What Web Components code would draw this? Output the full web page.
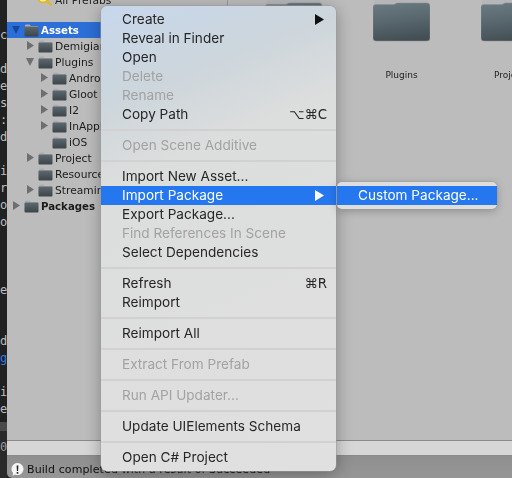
<!DOCTYPE html>
<html>
<head>
<meta charset="utf-8">
<title>Assets context menu</title>
<style>
  html, body { margin: 0; padding: 0; height: 100%; background: #222; overflow: hidden; }
</style>
</head>
<body>
<editor-window>
  <console-strip slot="console"></console-strip>
  <project-panel slot="panel">
    <tree-row slot="tree" favorite label="All Prefabs"></tree-row>
    <tree-row slot="tree" gap level="0" open selected label="Assets"></tree-row>
    <tree-row slot="tree" level="1" arrow label="Demigiant"></tree-row>
    <tree-row slot="tree" level="1" open label="Plugins"></tree-row>
    <tree-row slot="tree" level="2" arrow label="Android"></tree-row>
    <tree-row slot="tree" level="2" arrow label="Gloot"></tree-row>
    <tree-row slot="tree" level="2" arrow label="I2"></tree-row>
    <tree-row slot="tree" level="2" arrow label="InAppPurchasing"></tree-row>
    <tree-row slot="tree" level="2" label="iOS"></tree-row>
    <tree-row slot="tree" level="1" arrow label="Project"></tree-row>
    <tree-row slot="tree" level="1" label="Resources"></tree-row>
    <tree-row slot="tree" level="1" arrow label="StreamingAssets"></tree-row>
    <tree-row slot="tree" level="0" arrow bold label="Packages"></tree-row>
    <asset-tile slot="grid"></asset-tile>
    <asset-tile slot="grid" label="Plugins"></asset-tile>
    <asset-tile slot="grid" label="Project"></asset-tile>
  </project-panel>
  <status-bar slot="status">Build completed with a result of Succeeded</status-bar>
</editor-window>

<context-menu id="assets-menu">
  <menu-item sub>Create</menu-item>
  <menu-item>Reveal in Finder</menu-item>
  <menu-item>Open</menu-item>
  <menu-item disabled>Delete</menu-item>
  <menu-item disabled>Rename</menu-item>
  <menu-item shortcut="⌥⌘C">Copy Path</menu-item>
  <menu-sep></menu-sep>
  <menu-item disabled>Open Scene Additive</menu-item>
  <menu-sep></menu-sep>
  <menu-item>Import New Asset...</menu-item>
  <menu-item sub active>Import Package</menu-item>
  <menu-item>Export Package...</menu-item>
  <menu-item disabled>Find References In Scene</menu-item>
  <menu-item>Select Dependencies</menu-item>
  <menu-sep></menu-sep>
  <menu-item shortcut="⌘R">Refresh</menu-item>
  <menu-item>Reimport</menu-item>
  <menu-sep></menu-sep>
  <menu-item>Reimport All</menu-item>
  <menu-sep></menu-sep>
  <menu-item disabled>Extract From Prefab</menu-item>
  <menu-sep></menu-sep>
  <menu-item disabled>Run API Updater...</menu-item>
  <menu-sep></menu-sep>
  <menu-item>Update UIElements Schema</menu-item>
  <menu-sep></menu-sep>
  <menu-item>Open C# Project</menu-item>
</context-menu>
<sub-menu><menu-item active>Custom Package...</menu-item></sub-menu>

<script>
// helper: every component is a shadow root plus its own style
class Base extends HTMLElement {
  constructor() {
    super();
    this.attachShadow({ mode: 'open' });
  }
  connectedCallback() {
    this.shadowRoot.innerHTML = this.markup();
  }
}

class EditorWindow extends Base {
  markup() {
    return `
      <style>
        :host { display: flex; width: 512px; height: 478px; overflow: hidden; filter: blur(0.35px); }
        .left { flex: 0 0 7px; overflow: hidden; }
        .right { flex: 1; display: flex; flex-direction: column; min-width: 0; border-bottom-left-radius: 5px; overflow: hidden; }
      </style>
      <div class="left"><slot name="console"></slot></div>
      <div class="right">
        <slot name="panel"></slot>
        <slot name="status"></slot>
      </div>`;
  }
}

class ConsoleStrip extends Base {
  markup() {
    const lines = ['c','','d','e','s',':','d','','i','r','o','o','','','','e','','','d','g','','i','e'];
    const rows = lines.map(c => `<div class="ln${c === 'g' ? ' link' : ''}">${c}</div>`).join('');
    return `
      <style>
        :host { display: flex; flex-direction: column; height: 478px; background: #212121; }
        .code { height: 422px; padding-top: 27px; box-sizing: border-box; overflow: hidden; }
        .ln { height: 17px; line-height: 17px; text-align: right; font: 12px/17px "DejaVu Sans Mono", monospace; color: #bdbdbd; }
        .link { color: #2f7be0; }
        .bar { height: 9px; background: #4a4a4a; }
        .foot { flex: 1; text-align: right; font: 12px/32px "DejaVu Sans Mono", monospace; color: #9a9a9a; background: #2a2a2a; }
      </style>
      <div class="code">${rows}</div>
      <div class="bar"></div>
      <div class="foot">0</div>`;
  }
}

class ProjectPanel extends Base {
  markup() {
    return `
      <style>
        :host { display: flex; flex-direction: column; flex: 1; height: 456px; background: #bcbcbc; min-height: 0; }
        .main { flex: 1; display: flex; min-height: 0; overflow: hidden; }
        .tree { flex: 0 0 221px; box-sizing: border-box; border-right: 1px solid #9a9a9a; overflow: hidden; }
        .tree-in { margin-top: -8px; }
        .grid { flex: 1; display: flex; padding-left: 37px; overflow: hidden; }
        .crumbs { height: 16px; box-sizing: border-box; background: #d6d6d6; border-top: 1px solid #8a8a8a; border-bottom: 1px solid #8a8a8a; }
      </style>
      <div class="main">
        <div class="tree"><div class="tree-in"><slot name="tree"></slot></div></div>
        <div class="grid"><slot name="grid"></slot></div>
      </div>
      <div class="crumbs"></div>`;
  }
}

class TreeRow extends Base {
  markup() {
    const level = Number(this.getAttribute('level') || 0);
    const open = this.hasAttribute('open');
    const hasArrow = open || this.hasAttribute('arrow');
    const selected = this.hasAttribute('selected');
    const strong = this.hasAttribute('bold') || selected;
    const arrowColor = selected ? '#17479a' : '#6f6f6f';
    const tri = open ? 'M0 1h8L4 9z' : 'M1 0l7 4.5L1 9z';
    const arrow = hasArrow ? `<svg width="8" height="10" viewBox="0 0 8 10"><path d="${tri}" fill="${arrowColor}"/></svg>` : '';
    const icon = this.hasAttribute('favorite')
      ? `<svg width="16" height="14" viewBox="0 0 16 14"><circle cx="6" cy="4.5" r="5" fill="#f1e8b4" stroke="#e3b81e" stroke-width="2"/><path d="M10 8l4.5 4.5" stroke="#e3b81e" stroke-width="2.4"/></svg>`
      : `<svg width="15" height="13" viewBox="0 0 15 13">
           <path d="M1 3V1.5Q1 .5 2 .5h3.5L7 2h6.5q.8 0 .8 1z" fill="#a9adb0"/>
           <rect x=".5" y="2.5" width="14" height="10" rx="1" fill="url(#f)"/>
           <defs><linearGradient id="f" x1="0" y1="0" x2="0" y2="1"><stop offset="0" stop-color="#5d6a70"/><stop offset="1" stop-color="#3b4449"/></linearGradient></defs>
         </svg>`;
    return `
      <style>
        :host { display: block; height: 16px; ${this.hasAttribute('gap') ? 'margin-top: 14px;' : ''} }
        .row { display: flex; align-items: center; height: 16px; white-space: nowrap;
          padding-left: ${5 + level * 14}px; gap: 4px;
          font: ${strong ? '700 10.2px' : '400 10.7px'} "DejaVu Sans", sans-serif;
          color: ${selected ? '#fff' : '#1c1c1c'}; background: ${selected ? '#2c6fd8' : 'none'}; }
        .arrow { flex: 0 0 8px; display: flex; }
        .icon { flex: none; display: flex; margin-right: -2px; }
        .fav { padding-left: 18px; }
      </style>
      <div class="row${this.hasAttribute('favorite') ? ' fav' : ''}">
        <span class="arrow">${arrow}</span>
        <span class="icon">${icon}</span>
        <span>${this.getAttribute('label')}</span>
      </div>`;
  }
}

class AssetTile extends Base {
  markup() {
    const label = this.getAttribute('label') || '';
    return `
      <style>
        :host { display: block; flex: 0 0 108px; width: 108px; }
        .tile { width: 57px; text-align: center; }
        svg { display: block; }
        .label { width: 57px; margin-top: 25px; display: flex; justify-content: center; white-space: nowrap;
          font: 9px/16px "DejaVu Sans", sans-serif; color: #222; }
      </style>
      <div class="tile">
        <svg width="57" height="42" viewBox="0 0 57 42">
          <defs><linearGradient id="b" x1="0.2" y1="0" x2="0.4" y2="1"><stop offset="0" stop-color="#6b7a81"/><stop offset="0.5" stop-color="#58666d"/><stop offset="1" stop-color="#434f55"/></linearGradient></defs>
          <path d="M1 6V2Q1 0 3 0h51q2 0 2 2v3z" fill="#b4b6b7"/>
          <path d="M0 7Q0 4.500 3 4.500h18l3-1.500h30q3 0 3 3v32q0 3-3 3H3q-3 0-3-3z" fill="url(#b)" stroke="#8d8f90" stroke-width=".5"/>
        </svg>
        <div class="label"><span>${label}</span></div>
      </div>`;
  }
}

class StatusBar extends Base {
  markup() {
    return `
      <style>
        :host { display: flex; align-items: center; flex: 0 0 22px; box-sizing: border-box; padding: 4px 0 0 3px; gap: 2px;
          background: linear-gradient(#8f8f8f, #969696); font: 11px "DejaVu Sans", sans-serif; letter-spacing: .1px; color: #111; white-space: nowrap; overflow: hidden; }
        svg { flex: none; }
      </style>
      <svg width="15" height="15" viewBox="0 0 15 15">
        <path d="M7.5 1a6 6 0 1 1-2.600 11.400L2.600 14l.5-3A6 6 0 0 1 7.500 1z" fill="#f5f5f5"/>
        <path d="M6.600 3.500h1.800l-.3 5.500H6.900zM6.700 10h1.600v1.700H6.700z" fill="#222"/>
      </svg>
      <slot></slot>`;
  }
}

class ContextMenu extends Base {
  markup() {
    return `
      <style>
        :host { display: block; position: absolute; left: 101px; top: 6px; width: 235px; box-sizing: border-box; padding: 4px 0;
          border-radius: 6px; filter: blur(0.35px);
          background: linear-gradient(158deg, #c7d7ec 0, #cdd6dc 18%, #dcdddd 32%, #e0e0e0 100%);
          box-shadow: 0 0 0 .5px #9c9c9c, 0 3px 16px rgba(0,0,0,.32); }
      </style>
      <slot></slot>`;
  }
}

class SubMenu extends Base {
  markup() {
    return `
      <style>
        :host { display: block; position: absolute; left: 337px; top: 182px; width: 160px; box-sizing: border-box; padding: 4px 0;
          border-radius: 5px; background: #dedede; filter: blur(0.35px); box-shadow: 0 0 0 .5px #9c9c9c, 0 2px 8px rgba(0,0,0,.25);
          --item-pad: 21px; }
      </style>
      <slot></slot>`;
  }
}

class MenuItem extends Base {
  markup() {
    const active = this.hasAttribute('active');
    const disabled = this.hasAttribute('disabled');
    const shortcut = this.getAttribute('shortcut');
    const color = active ? '#fff' : disabled ? '#a2a2a2' : '#262626';
    return `
      <style>
        :host { display: block; }
        .item { display: flex; align-items: center; justify-content: space-between; height: 19px; box-sizing: border-box;
          padding: 0 9px 1px var(--item-pad, 21px); white-space: nowrap;
          font: 400 13.6px "Inter", "Liberation Sans", sans-serif; color: ${color}; background: ${active ? '#2477ee' : 'none'}; }
        .key { font: 13.3px "DejaVu Sans", sans-serif; }
        svg { margin-right: 3px; }
      </style>
      <div class="item">
        <span><slot></slot></span>
        ${shortcut ? `<span class="key">${shortcut}</span>` : ''}
        ${this.hasAttribute('sub') ? `<svg width="9" height="11" viewBox="0 0 9 11"><path d="M0 0l9 5.500L0 11z" fill="${active ? '#fff' : '#111'}"/></svg>` : ''}
      </div>`;
  }
}

class MenuSep extends Base {
  markup() {
    return `
      <style>
        :host { display: flex; align-items: center; height: 12px; }
        div { flex: 1; height: 2px; background: #d1d1d1; }
      </style>
      <div></div>`;
  }
}

customElements.define('editor-window', EditorWindow);
customElements.define('console-strip', ConsoleStrip);
customElements.define('project-panel', ProjectPanel);
customElements.define('tree-row', TreeRow);
customElements.define('asset-tile', AssetTile);
customElements.define('status-bar', StatusBar);
customElements.define('context-menu', ContextMenu);
customElements.define('sub-menu', SubMenu);
customElements.define('menu-item', MenuItem);
customElements.define('menu-sep', MenuSep);
</script>
</body>
</html>
